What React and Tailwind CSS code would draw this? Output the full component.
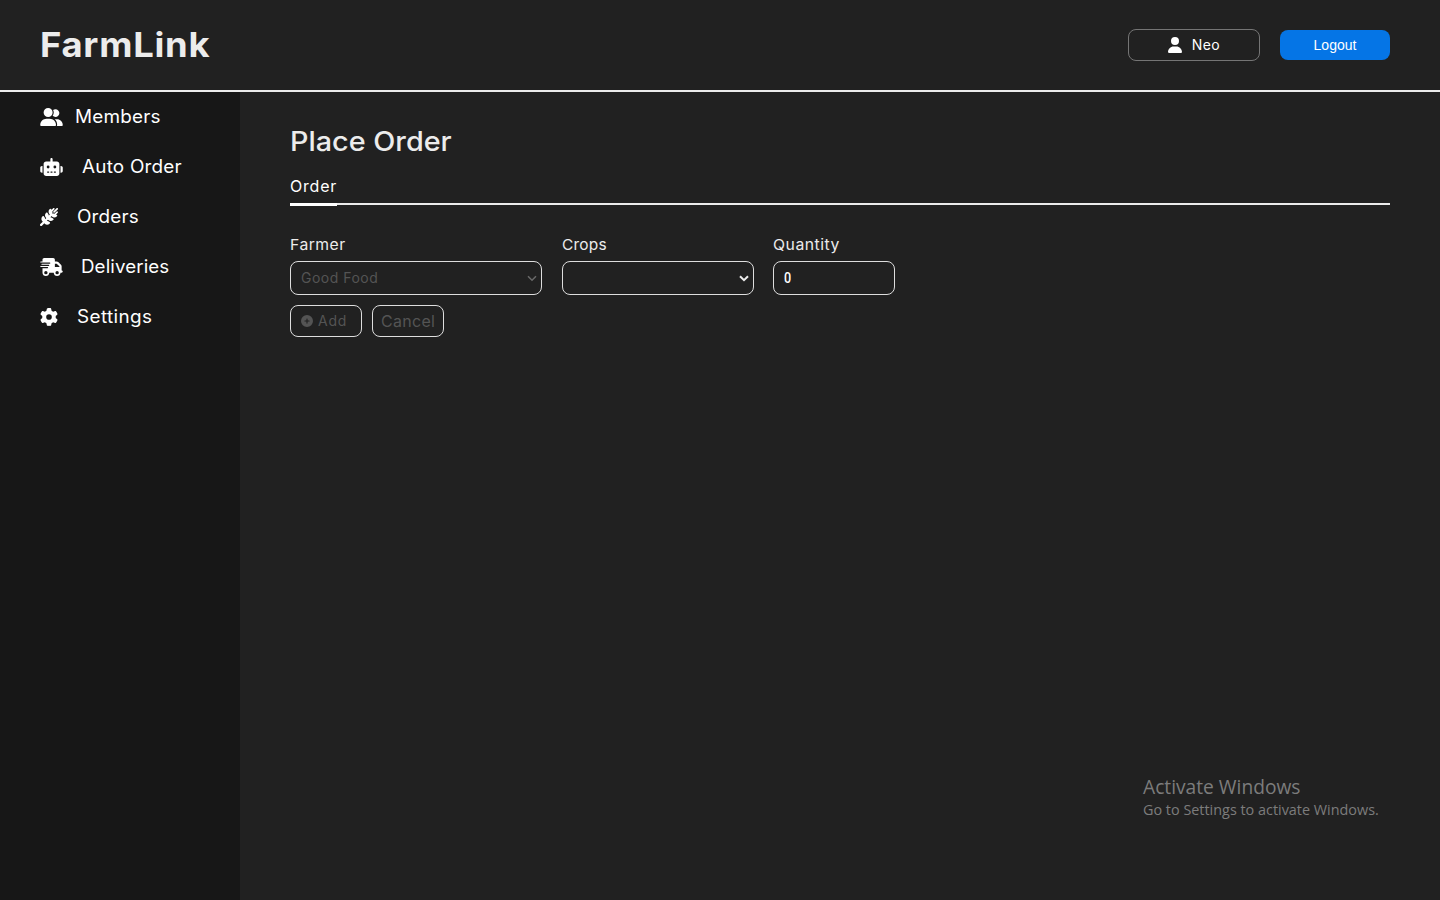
import { FaUser, FaUserGroup, FaRobot, FaWheatAwn, FaTruckFast, FaGear, FaCirclePlus } from "react-icons/fa6";

const NAV = [
  { label: "Members", Icon: FaUserGroup, gap: "gap-[12px]", size: "w-[23px]", track: "tracking-[0.2px] scale-x-[1.05]" },
  { label: "Auto Order", Icon: FaRobot, gap: "gap-[19px]", size: "w-[23px]", track: "tracking-[0.2px] scale-x-[1.05]" },
  { label: "Orders", Icon: FaWheatAwn, gap: "gap-[19px]", size: "w-[18px]", track: "tracking-[0.15px] scale-x-[1.05]" },
  { label: "Deliveries", Icon: FaTruckFast, gap: "gap-[18px]", size: "w-[23px]", track: "tracking-[0.1px] scale-x-[1.04]" },
  { label: "Settings", Icon: FaGear, gap: "gap-[19px]", size: "w-[18px]", track: "tracking-[0.35px] scale-x-[1.05]" },
];

function Chevron({ className }) {
  return (
    <svg viewBox="0 0 10 7" className={className} fill="none" stroke="currentColor">
      <path d="M1 1.2l4 4 4-4" />
    </svg>
  );
}

export default function App() {
  return (
    <div className="flex h-[900px] w-[1440px] flex-col overflow-hidden bg-[#212121] font-['Inter',sans-serif] text-[#ececec]">
      <header className="flex h-[92px] shrink-0 items-center justify-between border-b-2 border-[#ececec] pr-[50px] pl-10">
        <h1 className="origin-left scale-x-[1.07] text-[34px] leading-[40px] font-bold tracking-[0.7px]">FarmLink</h1>
        <div className="flex items-center gap-5">
          <button className="flex h-8 w-[132px] items-center justify-center gap-[10px] rounded-lg border border-[#757575] text-[14px] text-white">
            <FaUser className="h-4 w-[14px]" />
            <span className="-mt-px tracking-[0.4px]">Neo</span>
          </button>
          <button className="h-[30px] w-[110px] rounded-lg bg-[#0575e6] font-['Liberation_Sans',sans-serif] text-[14px] text-white">Logout</button>
        </div>
      </header>

      <div className="flex min-h-0 flex-1">
        <nav className="flex w-60 shrink-0 flex-col bg-[#171717] pl-10">
          {NAV.map(({ label, Icon, gap, size, track }) => (
            <a key={label} className={`flex h-[50px] items-center text-[18px] text-white ${gap}`}>
              <Icon className={`h-[18px] ${size}`} />
              <span className={`-mt-0.5 origin-left ${track}`}>{label}</span>
            </a>
          ))}
        </nav>

        <main className="flex flex-1 flex-col px-[50px] pt-8">
          <h2 className="h-[36px] origin-left scale-x-[1.066] self-start text-[27px] leading-[36px] font-medium">Place Order</h2>
          <div className="mt-[15px] flex h-[30px] border-b-2 border-[#ececec]">
            <div className="h-[31px] w-[47px] border-b-[3px] border-white text-[16px] leading-[22px] tracking-[0.8px] whitespace-nowrap text-white">Order</div>
          </div>

          <div className="mt-[30px] flex">
            <label className="mr-5 flex w-[252px] flex-col">
              <span className="h-[26px] origin-left scale-x-[1.05] self-start text-[15px] leading-[20px] tracking-[0.45px]">Farmer</span>
              <span className="flex h-[34px] items-center justify-between rounded-lg border border-[#dedede] pr-1 pl-[10px] text-[14px] text-[#545454]">
                <span className="-mt-px tracking-[0.5px]">Good Food</span>
                <Chevron className="h-[7px] w-[10px] stroke-[1.5] text-[#6a6a6a]" />
              </span>
            </label>
            <label className="mr-[19px] flex w-48 flex-col">
              <span className="h-[26px] origin-left scale-x-[1.03] self-start text-[15px] leading-[20px] tracking-[0.2px]">Crops</span>
              <span className="flex h-[34px] items-center justify-end rounded-lg border border-[#dedede] pr-1">
                <Chevron className="h-[7px] w-[10px] stroke-2" />
              </span>
            </label>
            <label className="flex w-[122px] flex-col">
              <span className="h-[26px] origin-left scale-x-[1.05] self-start text-[15px] leading-[20px] tracking-[0.5px]">Quantity</span>
              <span className="flex h-[34px] items-center rounded-lg border border-[#dedede] pl-[10px] font-['Roboto',sans-serif] text-[14px] text-white">
                <span className="origin-left scale-x-90 font-medium">0</span>
              </span>
            </label>
          </div>

          <div className="mt-[10px] flex gap-[10px] text-[#545454]">
            <button className="flex h-8 w-[72px] items-center gap-[5px] rounded-lg border border-[#dedede] pl-[10px] text-[14px]">
              <FaCirclePlus className="h-3 w-3" />
              <span className="-mt-px tracking-[0.8px]">Add</span>
            </button>
            <button className="flex h-8 w-[72px] items-center rounded-lg border border-[#dedede] pl-2 text-[16px] tracking-[0.3px]">Cancel</button>
          </div>

          <aside className="mt-auto mr-[-50px] mb-[80px] w-[297px] self-end font-['Open_Sans',sans-serif] whitespace-nowrap text-[#7c7c7c]">
            <p className="-mt-px mb-px text-[19.2px] leading-[24px]">Activate Windows</p>
            <p className="text-[14.4px] leading-[20px]">Go to Settings to activate Windows.</p>
          </aside>
        </main>
      </div>
    </div>
  );
}
